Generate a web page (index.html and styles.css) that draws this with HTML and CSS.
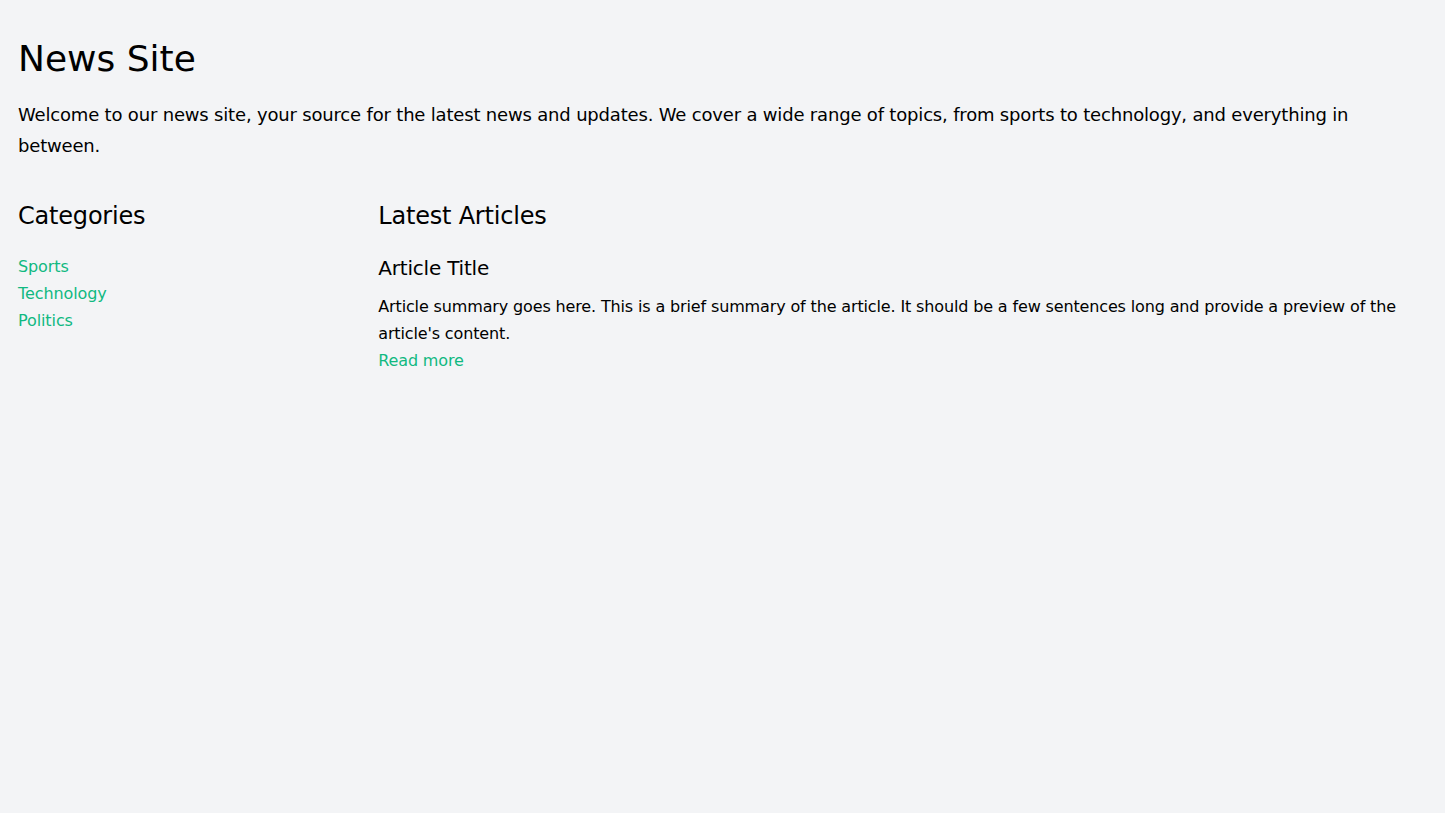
FILE: index.html
```html
<!DOCTYPE html>
<html lang="en">
<head>
    <meta charset="UTF-8">
    <meta name="viewport" content="width=device-width, initial-scale=1.0">
    <title>News Site</title>
    <link rel="stylesheet" href="styles.css">
</head>
<body>
    <div class="container">
        <header class="header">
            <h1 class="title">News Site</h1>
            <p class="intro">Welcome to our news site, your source for the latest news and updates. We cover a wide range of topics, from sports to technology, and everything in between.</p>
        </header>

        <div class="layout">
            <aside class="sidebar">
                <h2 class="section-title">Categories</h2>
                <ul class="category-list">
                    <li><a href="#">Sports</a></li>
                    <li><a href="#">Technology</a></li>
                    <li><a href="#">Politics</a></li>
                </ul>
            </aside>

            <main class="articles">
                <h2 class="section-title">Latest Articles</h2>
                <article class="article">
                    <h3 class="article-title">Article Title</h3>
                    <p class="article-summary">Article summary goes here. This is a brief summary of the article. It should be a few sentences long and provide a preview of the article's content.</p>
                    <a href="#" class="read-more">Read more</a>
                </article>
            </main>
        </div>
    </div>
</body>
</html>
```

FILE: styles.css
```css
* {
    margin: 0;
    padding: 0;
    box-sizing: border-box;
}

body {
    font-family: 'DejaVu Sans', 'Liberation Sans', sans-serif;
    background: #f3f4f6;
    color: #000;
}

a {
    color: #10b981;
    text-decoration: none;
}

.container {
    padding: 39px 18px;
}

.header {
    margin-bottom: 39px;
}

.title {
    font-size: 36px;
    line-height: 40px;
    font-weight: 400;
    margin-bottom: 20px;
}

.intro {
    font-size: 18px;
    line-height: 31px;
    letter-spacing: -0.18px;
}

.layout {
    display: grid;
    grid-template-columns: repeat(4, 1fr);
    gap: 32px;
}

.articles {
    grid-column: span 3;
}

.section-title {
    font-size: 24px;
    line-height: 32px;
    font-weight: 400;
    letter-spacing: -0.2px;
    margin-bottom: 21px;
}

.articles .section-title {
    margin-bottom: 22px;
}

.category-list {
    list-style: none;
    font-size: 16px;
    line-height: 27px;
    letter-spacing: -0.1px;
}

.article-title {
    font-size: 20px;
    line-height: 28px;
    font-weight: 400;
    letter-spacing: -0.2px;
    margin-bottom: 11px;
}

.article-summary,
.read-more {
    font-size: 16px;
    line-height: 27px;
    letter-spacing: -0.14px;
}
```
